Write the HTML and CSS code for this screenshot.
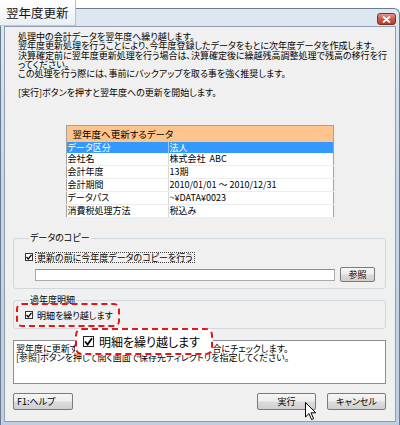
FILE: index.html
```html
<!DOCTYPE html>
<html lang="ja">
<head>
<meta charset="utf-8">
<link rel="stylesheet" href="styles.css">
</head>
<body>
<div class="window">
  <div class="tab">翌年度更新</div>
  <div class="titlebar">
    <div class="close"><svg width="9" height="7" viewBox="0 0 9 7"><path d="M1 0.5 L8 6.5 M8 0.5 L1 6.5" stroke="#fff" stroke-width="1.8"/></svg></div>
  </div>
  <div class="body">
    <div class="intro">処理中の会計データを翌年度へ繰り越します。<br>翌年度更新処理を行うことにより、今年度登録したデータをもとに次年度データを作成します。<br>決算確定前に翌年度更新処理を行う場合は、決算確定後に繰越残高調整処理で残高の移行を行<br>ってください。<br>この処理を行う際には、事前にバックアップを取る事を強く推奨します。<br><br>[実行]ボタンを押すと翌年度への更新を開始します。</div>

    <table class="data">
      <tr><th colspan="2">翌年度へ更新するデータ</th></tr>
      <tr class="sel"><td class="k">データ区分</td><td>法人</td></tr>
      <tr><td class="k">会社名</td><td>株式会社&nbsp;&nbsp;ABC</td></tr>
      <tr><td class="k">会計年度</td><td>13期</td></tr>
      <tr><td class="k">会計期間</td><td>2010/01/01 ～ 2010/12/31</td></tr>
      <tr><td class="k">データパス</td><td>~¥DATA¥0023</td></tr>
      <tr><td class="k">消費税処理方法</td><td>税込み</td></tr>
    </table>

    <fieldset class="group copy">
      <legend>データのコピー</legend>
      <div class="checkrow">
        <span class="cb"><svg width="6" height="6" viewBox="0 0 6 6"><path d="M0.5 3 L2.3 5 L5.5 0.8" fill="none" stroke="#000" stroke-width="1.3"/></svg></span>
        <span class="lbl focus">更新の前に今年度データのコピーを行う</span>
      </div>
      <div class="pathrow">
        <div class="input"></div>
        <div class="btn small">参照</div>
      </div>
    </fieldset>

    <fieldset class="group past">
      <legend>過年度明細</legend>
      <div class="checkrow marked">
        <span class="cb"><svg width="6" height="6" viewBox="0 0 6 6"><path d="M0.5 3 L2.3 5 L5.5 0.8" fill="none" stroke="#000" stroke-width="1.3"/></svg></span>
        <span class="lbl">明細を繰り越します</span>
        <span class="mark"></span>
      </div>
    </fieldset>

    <div class="desc">翌年度に更新する際に、過年度の明細を繰り越す場合にチェックします。<br>[参照]ボタンを押して開く画面で保存先ディレクトリを指定してください。</div>

    <div class="buttons">
      <div class="btn help">F1:ヘルプ</div>
      <div class="spacer"></div>
      <div class="btn">実行</div>
      <div class="btn">キャンセル</div>
    </div>
  </div>

  <div class="callout">
    <span class="cb big"><svg width="9" height="9" viewBox="0 0 9 9"><path d="M1 4.5 L3.6 7.5 L8 1.2" fill="none" stroke="#000" stroke-width="1.8"/></svg></span>
    <span>明細を繰り越します</span>
  </div>

  <svg class="cursor" width="12" height="19" viewBox="0 0 12 19"><path d="M0.5 0.5 L0.5 15 L4 11.6 L6.6 17.6 L8.6 16.7 L6 10.8 L10.8 10.8 Z" fill="#fff" stroke="#000" stroke-width="1"/></svg>
</div>
</body>
</html>
```

FILE: styles.css
```css
html, body {
  margin: 0;
  padding: 0;
}
body {
  width: 400px;
  height: 425px;
  overflow: hidden;
  background: #ffffff;
  font-family: "Noto Sans CJK JP", "Liberation Sans", sans-serif;
  font-feature-settings: "palt";
  color: #000;
}
.window {
  position: relative;
  margin-top: 8px;
  height: 417px;
  box-sizing: border-box;
  border: 1px solid #6a7b8f;
  border-bottom: none;
  border-radius: 6px 6px 0 0;
  background: linear-gradient(#dfe8f1, #c7d6e6 40%, #bfcfe1);
  padding: 0 3px 3px;
  display: flex;
  flex-direction: column;
}
.tab {
  position: absolute;
  left: -1px;
  top: -9px;
  width: 76px;
  height: 26px;
  box-sizing: border-box;
  background: linear-gradient(#ffffff, #f3f6fa 60%, #e9eef4);
  border-right: 1px solid #b3c0ce;
  border-bottom: 1px solid #b9c6d4;
  font-size: 12.5px;
  line-height: 14px;
  padding: 6px 0 0 6px;
  letter-spacing: 0;
  font-feature-settings: normal;
  color: #111;
  z-index: 2;
}
.titlebar {
  height: 17px;
  flex: none;
  display: flex;
  justify-content: flex-end;
  align-items: flex-start;
}
.close {
  margin-top: 4px;
  width: 19px;
  height: 12px;
  box-sizing: border-box;
  border: 1px solid #7e3128;
  border-radius: 3px;
  background: linear-gradient(#e1978b, #c95a4a 50%, #b23e2d);
  display: flex;
  align-items: center;
  justify-content: center;
}
.body {
  flex: 1;
  background: #f0f0f0;
  border: 1px solid #8d9eb2;
  padding: 0 9px 0 8px;
  display: flex;
  flex-direction: column;
}
.intro {
  margin: 5px 0 0 5px;
  font-size: 9px;
  line-height: 9.3px;
  white-space: nowrap;
  height: 65px;
}
.data {
  margin: 28px auto 0;
  width: 268px;
  border-collapse: collapse;
  border: 1px solid #a3a3a3;
  background: #fff;
  font-size: 9px;
}
.data th {
  height: 16px;
  padding: 0 0 0 6px;
  background: #fdc58d;
  font-weight: normal;
  text-align: left;
  font-size: 9.5px;
}
.data td {
  height: 12px;
  padding: 0 2px 0 1px;
  line-height: 12px;
  border-bottom: 1px solid #ececec;
  white-space: nowrap;
}
.data td.k {
  width: 98px;
  border-right: 1px solid #d8d8d8;
}
.data tr.sel td {
  background: #3399ff;
  color: #fff;
  height: 11px;
  line-height: 11px;
  border-bottom: none;
  border-right-color: #9cc8f5;
}
.group {
  margin: 0;
  padding: 0;
  border: 1px solid #d0d7dd;
  border-radius: 3px;
  font-size: 9px;
  min-width: 0;
}
.group legend {
  margin-left: 4px;
  padding: 0 1px;
  line-height: 10px;
  font-size: 9px;
}
.copy {
  margin-top: 15px;
  padding: 0 0 7px 11px;
  height: 56px;
  box-sizing: border-box;
}
.past {
  margin-top: 6px;
  padding: 0 0 0 11px;
  height: 34px;
  box-sizing: border-box;
}
.checkrow {
  display: flex;
  align-items: center;
  gap: 3px;
  height: 10px;
  margin-top: 9px;
}
.past .checkrow {
  margin-top: 5px;
}
.checkrow.marked {
  position: relative;
  display: inline-flex;
  width: max-content;
}
.cb {
  width: 8px;
  height: 8px;
  box-sizing: border-box;
  border: 1px solid #333;
  background: #fff;
  display: flex;
  align-items: center;
  justify-content: center;
  flex: none;
}
.lbl {
  font-size: 9px;
  line-height: 9px;
  white-space: nowrap;
  padding: 0 1px;
}
.lbl.focus {
  outline: 1px dotted #444;
  outline-offset: 0;
}
.mark {
  position: absolute;
  left: -9px;
  right: -6px;
  top: -7px;
  bottom: -7px;
  border: 2px dashed #e3161a;
  border-radius: 6px;
}
.pathrow {
  display: flex;
  align-items: center;
  gap: 5px;
  margin: 5px 0 0 10px;
}
.input {
  width: 300px;
  height: 12px;
  box-sizing: border-box;
  border: 1px solid #a9a9a9;
  border-top-color: #8f8f8f;
  background: #fff;
}
.btn {
  height: 17px;
  width: 59px;
  box-sizing: border-box;
  border: 1px solid #7a7a7a;
  border-radius: 2px;
  background: linear-gradient(#f6f6f6, #ececec 48%, #dcdcdc 52%, #cfcfcf);
  font-size: 9px;
  display: flex;
  align-items: center;
  justify-content: center;
  white-space: nowrap;
}
.btn.small {
  width: 35px;
  height: 15px;
}
.btn.help {
  width: 60px;
  justify-content: flex-start;
  padding-left: 3px;
}
.desc {
  margin-top: 11px;
  height: 44px;
  box-sizing: border-box;
  border: 1px solid #8a8f96;
  background: #fff;
  font-size: 9px;
  line-height: 9.3px;
  padding: 3px 2px;
  white-space: nowrap;
  overflow: hidden;
}
.buttons {
  display: flex;
  gap: 11px;
  margin-top: 9px;
}
.spacer {
  flex: 1;
}
.callout {
  position: absolute;
  left: 74px;
  top: 319px;
  width: 138px;
  height: 27px;
  box-sizing: border-box;
  border: 2px dashed #e3161a;
  border-radius: 7px;
  background: #fff;
  display: flex;
  align-items: center;
  gap: 5px;
  padding-left: 6px;
  font-size: 12px;
  z-index: 3;
}
.cb.big {
  width: 11px;
  height: 11px;
  border-color: #222;
}
.cursor {
  position: absolute;
  left: 304px;
  top: 393px;
  z-index: 4;
}
```
